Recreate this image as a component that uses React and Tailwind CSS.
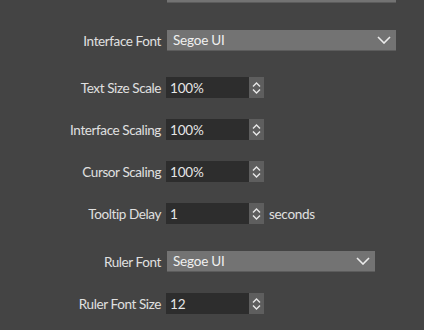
import React from "react";

const Spinner = () => (
  <div className="w-[15px] h-full bg-[#5e5e5e] flex items-center justify-center">
    <svg width="9" height="12" viewBox="0 0 9 12" fill="none">
      <path d="M1 4.5 L4.5 1 L8 4.5" stroke="#e8e8e8" strokeWidth="1.4" />
      <path d="M1 7.5 L4.5 11 L8 7.5" stroke="#e8e8e8" strokeWidth="1.4" />
    </svg>
  </div>
);

const Chevron = () => (
  <svg width="14" height="8" viewBox="0 0 14 8" fill="none">
    <path d="M1 1 L7 7 L13 1" stroke="#ececec" strokeWidth="1.6" />
  </svg>
);

const Label = ({ children }) => (
  <div className="w-[166px] pr-[5px] pt-[2px] leading-[19px] text-right shrink-0 text-[13.5px] tracking-[-0.4px] text-[#e0e0e0]">
    {children}
  </div>
);

const SpinRow = ({ label, value, suffix, className }) => (
  <div className={`flex h-[21px] ${className}`}>
    <Label>{label}</Label>
    <div className="flex h-[21px] w-[98px]">
      <div className="flex-1 bg-[#2d2d2d] pl-[4px] pt-[1px] text-[13.5px] tracking-[-0.2px] text-[#e6e6e6] leading-[20px]">
        {value}
      </div>
      <Spinner />
    </div>
    {suffix && (
      <span className="ml-[5px] pt-[1px] leading-[20px] text-[13.5px] tracking-[-0.3px] text-[#e0e0e0]">
        {suffix}
      </span>
    )}
  </div>
);

const SelectRow = ({ label, value, width, className }) => (
  <div className={`flex h-[21px] ${className}`}>
    <Label>{label}</Label>
    <div
      className={`ml-[1px] h-[21px] ${width} bg-[#737373] border-b border-[#5c5c5c] flex items-center justify-between pl-[6px] pr-[5px]`}
    >
      <span className="pt-[1px] leading-[19px] text-[13.5px] tracking-[-0.2px] text-[#f0f0f0]">{value}</span>
      <Chevron />
    </div>
  </div>
);

export default function App() {
  return (
    <div
      className="min-h-screen bg-[#444444] flex flex-col"
      style={{ fontFamily: "Lato, 'Noto Sans', sans-serif" }}
    >
      {/* top select cut off */}
      <div className="ml-[167px] w-[229px] h-[3px] bg-[#737373] border-b border-[#5c5c5c]" />

      <SelectRow label="Interface Font" value="Segoe UI" width="w-[229px]" className="mt-[27px]" />

      <SpinRow label="Text Size Scale" value="100%" className="mt-[26px]" />
      <SpinRow label="Interface Scaling" value="100%" className="mt-[21px]" />
      <SpinRow label="Cursor Scaling" value="100%" className="mt-[21px]" />
      <SpinRow label="Tooltip Delay" value="1" suffix="seconds" className="mt-[21px]" />

      <SelectRow label="Ruler Font" value="Segoe UI" width="w-[208px]" className="mt-[27px]" />

      <SpinRow label="Ruler Font Size" value="12" className="mt-[21px]" />
    </div>
  );
}
